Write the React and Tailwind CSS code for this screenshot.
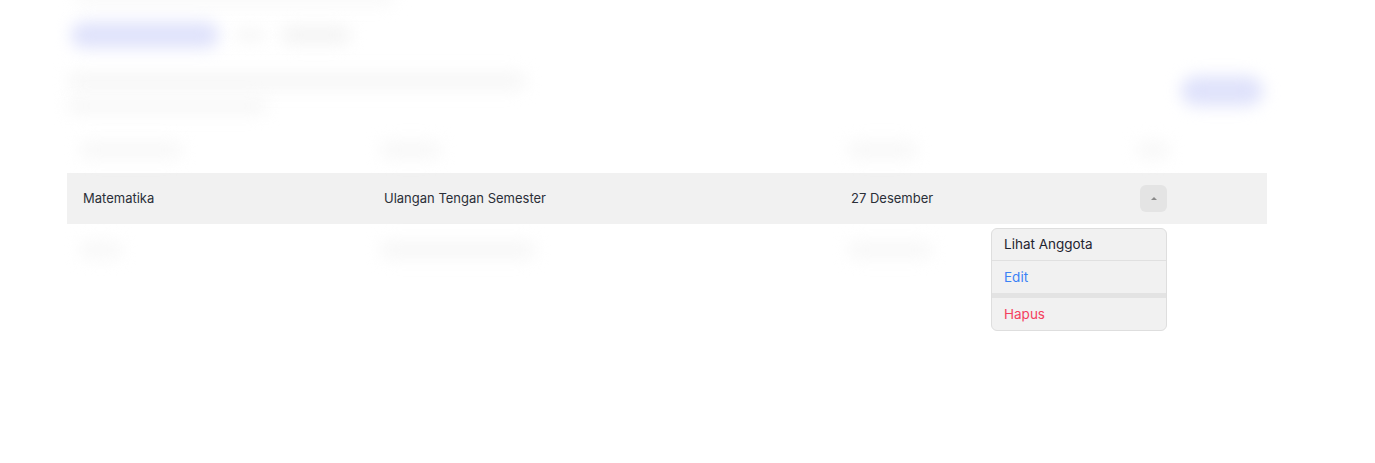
import React from 'react';

const font = { fontFamily: 'Inter, "Noto Sans", sans-serif' };

// faint blurred placeholder, stands in for page content behind the overlay
const Blur = ({ className }) => <div className={`rounded-full blur-[8px] ${className}`} />;

export default function App() {
  return (
    <div className="min-h-[463px] w-full bg-white text-[#2b2f38]" style={font}>
      <div className="mx-[67px] w-[1200px]">
        {/* top blurred header */}
        <div className="flex h-[10px] items-start gap-4 pl-[8px]">
          <Blur className="mt-[-8px] h-[12px] w-[320px] bg-[#f8f8f8]" />
        </div>
        <div className="mt-[12px] flex items-center gap-4">
          <Blur className="ml-[4px] h-[26px] w-[148px] bg-[#dfe2fb]" />
          <Blur className="h-[12px] w-[30px] bg-[#f6f6f6]" />
          <Blur className="h-[18px] w-[70px] bg-[#f4f4f4]" />
        </div>

        <div className="mt-[20px] flex items-start justify-between">
          <div className="flex flex-col gap-[8px] pt-[4px]">
            <Blur className="h-[18px] w-[460px] bg-[#f7f7f7]" />
            <Blur className="h-[16px] w-[200px] bg-[#f7f7f7]" />
          </div>
          <Blur className="mr-[4px] mt-[8px] h-[30px] w-[82px] bg-[#dfe2fb]" />
        </div>

        {/* table */}
        <div className="relative mt-[13px]">
          <div className="grid h-[46px] grid-cols-[301px_467px_289px_143px] items-center">
            <div className="pl-[12px]"><Blur className="h-[18px] w-[104px] bg-[#f8f8f8]" /></div>
            <div className="pl-[12px]"><Blur className="h-[18px] w-[62px] bg-[#f8f8f8]" /></div>
            <div className="pl-[12px]"><Blur className="h-[18px] w-[70px] bg-[#f8f8f8]" /></div>
            <div className="pl-[12px]"><Blur className="h-[18px] w-[34px] bg-[#f8f8f8]" /></div>
          </div>

          <div className="grid h-[51px] grid-cols-[301px_467px_289px_143px] items-center bg-[#f1f1f1] text-[13px]">
            <div className="pl-[16px]">Matematika</div>
            <div className="pl-[16px]">Ulangan Tengan Semester</div>
            <div className="pl-[16px]">27 Desember</div>
            <div className="pl-[16px]">
              <button className="flex h-[27px] w-[27px] items-center justify-center rounded-md bg-[#e4e4e4]">
                <span className="h-0 w-0 border-x-[3.5px] border-b-[3.5px] border-x-transparent border-b-[#8a8a8a]" />
              </button>
            </div>
          </div>

          <div className="grid h-[51px] grid-cols-[301px_467px_289px_143px] items-center">
            <div className="pl-[12px]"><Blur className="h-[18px] w-[44px] bg-[#f8f8f8]" /></div>
            <div className="pl-[12px]"><Blur className="h-[18px] w-[156px] bg-[#f7f7f7]" /></div>
            <div className="pl-[12px]"><Blur className="h-[18px] w-[86px] bg-[#f8f8f8]" /></div>
            <div />
          </div>

          {/* dropdown menu */}
          <div className="absolute left-[924px] top-[101px] w-[176px] overflow-hidden rounded-md border border-[#dedede] bg-[#f1f1f1] text-[13.5px]">
            <div className="flex h-[32px] items-center border-b border-[#e0e0e0] px-[12px] text-[#1f2430]">Lihat Anggota</div>
            <div className="flex h-[32px] items-center px-[12px] text-[#3b82f6]">Edit</div>
            <div className="h-[5px] bg-[#e3e3e3]" />
            <div className="flex h-[32px] items-center px-[12px] text-[#f43f5e]">Hapus</div>
          </div>
        </div>
      </div>
    </div>
  );
}
